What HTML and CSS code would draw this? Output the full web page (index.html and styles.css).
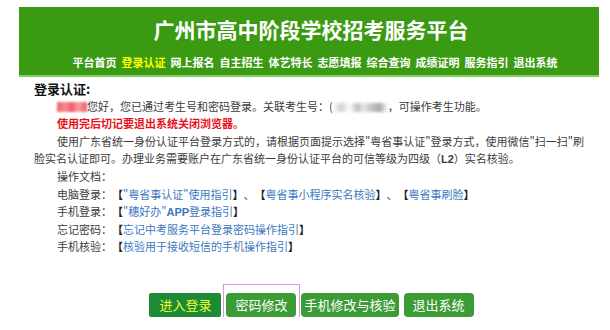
FILE: index.html
```html
<!DOCTYPE html>
<html lang="zh-CN">
<head>
<meta charset="utf-8">
<title>广州市高中阶段学校招考服务平台</title>
<link rel="stylesheet" href="styles.css">
</head>
<body>
<div class="page">
  <header class="hdr">
    <h1 class="title">广州市高中阶段学校招考服务平台</h1>
    <nav class="nav">
      <a class="nav-item">平台首页</a>
      <a class="nav-item nav-on">登录认证</a>
      <a class="nav-item">网上报名</a>
      <a class="nav-item">自主招生</a>
      <a class="nav-item">体艺特长</a>
      <a class="nav-item">志愿填报</a>
      <a class="nav-item">综合查询</a>
      <a class="nav-item">成绩证明</a>
      <a class="nav-item">服务指引</a>
      <a class="nav-item">退出系统</a>
    </nav>
  </header>
  <main class="content">
    <h2 class="sec">登录认证:</h2>
    <p class="ln ind"><span class="blur-name"></span>您好，您已通过考生号和密码登录。关联考生号：(<span class="blur-id"></span>，可操作考生功能。</p>
    <p class="ln ind warn">使用完后切记要退出系统关闭浏览器。</p>
    <p class="ln ind wrap2">使用广东省统一身份认证平台登录方式的，请根据页面提示选择"粤省事认证"登录方式，使用微信"扫一扫"刷<br>脸实名认证即可。办理业务需要账户在广东省统一身份认证平台的可信等级为四级（<span class="lat">L2</span>）实名核验。</p>
    <p class="ln ind">操作文档：</p>
    <p class="ln ind">电脑登录：<span class="br">【</span><a class="lk">"粤省事认证"使用指引</a><span class="br">】</span>、<span class="br">【</span><a class="lk">粤省事小程序实名核验</a><span class="br">】</span>、<span class="br">【</span><a class="lk">粤省事刷脸</a><span class="br">】</span></p>
    <p class="ln ind">手机登录：<span class="br">【</span><a class="lk">"穗好办"<span class="lat">APP</span>登录指引</a><span class="br">】</span></p>
    <p class="ln ind">忘记密码：<span class="br">【</span><a class="lk">忘记中考服务平台登录密码操作指引</a><span class="br">】</span></p>
    <p class="ln ind">手机核验：<span class="br">【</span><a class="lk">核验用于接收短信的手机操作指引</a><span class="br">】</span></p>
  </main>
  <div class="btns">
    <a class="btn btn-login">进入登录</a>
    <a class="btn btn-mark">密码修改<span class="mark"></span></a>
    <a class="btn btn-wide">手机修改与核验</a>
    <a class="btn">退出系统</a>
  </div>
</div>
</body>
</html>
```

FILE: styles.css
```css
* { box-sizing: border-box; }
html, body { margin: 0; padding: 0; background: #fff; }
body {
  font-family: "Noto Sans CJK SC", "Liberation Sans", sans-serif;
  color: #3c3c3c;
  text-spacing-trim: space-all;
}
.page {
  width: 580px;
  margin: 7px 0 0 19px;
}
.hdr {
  background: #3a9b13;
  height: 70px;
  border-bottom: 2px solid #7fcf60;
  padding-top: 7px;
}
.title {
  margin: 0;
  height: 30px;
  line-height: 30px;
  font-size: 21px;
  font-weight: 700;
  color: #fff;
  text-align: center;
  padding-left: 4px;
}
.nav {
  margin-top: 10px;
  display: flex;
  justify-content: center;
  gap: 5px;
  padding-left: 12px;
  font-size: 11px;
  line-height: 16px;
  font-weight: 700;
}
.nav-item { color: #fff; text-decoration: none; }
.nav-on { color: #ffff00; }
.content {
  padding: 3px 15px 0 15px;
  font-size: 11px;
  line-height: 17.6px;
}
.sec {
  margin: 0;
  height: 17.6px;
  font-size: 13px;
  font-weight: 700;
  line-height: 17.6px;
  color: #111;
}
.ln { margin: 0; height: 17.6px; white-space: nowrap; }
.ln.wrap2 { height: 35.2px; }
.ind { text-indent: 23px; }
.warn { color: #e8101a; font-weight: 700; }
.lat {
  font-family: "Liberation Sans", sans-serif;
  font-weight: 700;
  color: inherit;
  line-height: 1;
}
.br { color: #222; font-weight: 700; }
.lk { color: #3b78c0; text-decoration: none; }
.blur-name {
  display: inline-block;
  width: 30px;
  height: 10px;
  vertical-align: -1px;
  background: linear-gradient(90deg, #f2636e 0%, #f58a92 30%, #ef5a66 50%, #f7a0a8 70%, #ee5d69 100%);
  filter: blur(1px);
  text-indent: 0;
}
.blur-id {
  display: inline-block;
  width: 55px;
  height: 9px;
  vertical-align: -1px;
  background: linear-gradient(90deg, #fff 0%, #cfcfcf 15%, #fff 30%, #bdbdbd 45%, #e8e8e8 55%, #c4c4c4 70%, #a9a9a9 85%, #fff 100%);
  filter: blur(1.5px);
  text-indent: 0;
}
.btns {
  margin-top: 37px;
  display: flex;
  justify-content: center;
  gap: 5px;
  padding-left: 5px;
}
.btn {
  position: relative;
  display: block;
  min-width: 70px;
  height: 24px;
  line-height: 24px;
  padding: 0 3px;
  border-radius: 4px;
  background: #3b9c36;
  color: #fff;
  font-size: 13px;
  text-align: center;
  text-decoration: none;
}
.btn-login {
  min-width: 72px;
  background: #1d8a35;
  color: #f4ff33;
  border-radius: 2px;
}
.btn-wide { min-width: 96px; }
.mark {
  position: absolute;
  left: -3px;
  right: -4px;
  top: -9px;
  bottom: -6px;
  border: 1px solid #dd92dd;
}
```
